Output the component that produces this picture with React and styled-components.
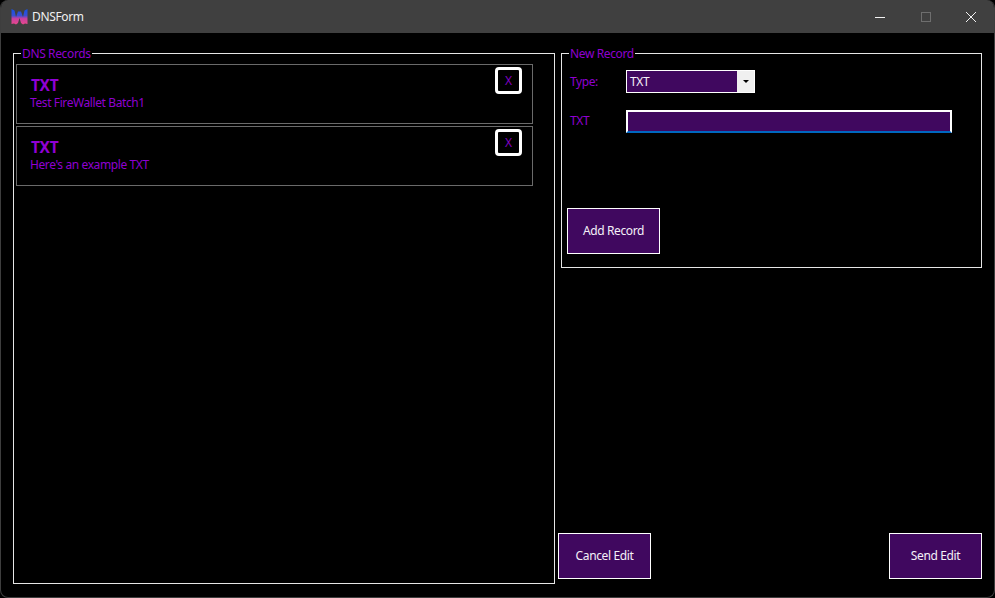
import React from "react";
import styled, { createGlobalStyle } from "styled-components";

const Global = createGlobalStyle`
  html, body { margin: 0; padding: 0; background: #000; }
  * { box-sizing: border-box; }
  body { font-family: "Noto Sans", "Open Sans", "Liberation Sans", sans-serif; }
`;

const Win = styled.div`
  width: 995px;
  height: 598px;
  display: flex;
  flex-direction: column;
  background: #000;
  border-radius: 8px;
  border: 1px solid #3e3e3e;
  border-top: 0;
  overflow: hidden;
`;

const TitleBar = styled.div`
  height: 33px;
  flex: none;
  margin: 0 -1px;
  background: #404040;
  display: flex;
  align-items: center;
  padding: 0 1px 0 11px;
  color: #f0f0f0;
  font-size: 12px;
`;

const TitleText = styled.span`
  margin-left: 4px;
  flex: 1;
  letter-spacing: -0.35px;
`;

const WinButton = styled.div`
  width: 45.5px;
  height: 33px;
  display: flex;
  align-items: center;
  justify-content: center;
`;

const Body = styled.div`
  flex: 1;
  display: flex;
  padding: 13px 12px 0 12px;
  min-height: 0;
`;

const Group = styled.fieldset`
  margin: 0;
  padding: 0;
  border: 1px solid #e6e6e6;
  min-width: 0;
`;

const RecordsGroup = styled(Group)`
  width: 542px;
  height: 538px;
  flex: none;
  padding: 4px 21px 0 2px;
  display: flex;
  flex-direction: column;
  gap: 2px;
`;

const Legend = styled.legend`
  margin-left: ${p => p.$ml}px;
  padding: 0 1px;
  height: 14px;
  font-size: 12px;
  line-height: 16px;
  color: #8f00d0;
  letter-spacing: -0.37px;
`;

const Card = styled.div`
  height: 60px;
  flex: none;
  border: 1px solid #6a6a6a;
  display: flex;
  justify-content: space-between;
  padding: 2px 10px 0 13px;
`;

const CardText = styled.div`
  display: flex;
  flex-direction: column;
  padding-top: 8px;
`;

const CardTitle = styled.div`
  font-size: 15.5px;
  line-height: 20px;
  font-weight: 700;
  color: #9000d4;
  letter-spacing: -0.35px;
  margin-left: 1px;
`;

const CardSub = styled.div`
  font-size: 12px;
  line-height: 15px;
  color: #8f00d0;
  letter-spacing: -0.4px;
`;

const XButton = styled.div`
  width: 27px;
  height: 27px;
  border: 3px solid #fff;
  border-radius: 4px;
  display: flex;
  align-items: center;
  justify-content: center;
  font-size: 12px;
  color: #8000c0;
`;

const Side = styled.div`
  flex: 1;
  margin-left: 3px;
  height: 544px;
  display: flex;
  flex-direction: column;
  justify-content: space-between;
`;

const NewGroup = styled(Group)`
  margin-left: 3px;
  width: 421px;
  height: 222px;
  flex: none;
  padding: 10px 0 0 5px;
  display: flex;
  flex-direction: column;
  align-items: flex-start;
`;

const Row = styled.div`
  display: flex;
  align-items: center;
  margin-left: 3px;
  margin-bottom: ${p => p.$mb || 0}px;
`;

const FieldLabel = styled.label`
  width: 56px;
  padding-bottom: ${p => p.$lift || 0}px;
  font-size: 12px;
  color: #8f00d0;
  letter-spacing: -0.4px;
`;

const Select = styled.div`
  width: 129px;
  height: 23px;
  display: flex;
  border: 1px solid #fff;
  background: #40085f;
  color: #f4f0f8;
  font-size: 12px;
  line-height: 21px;
`;

const SelectValue = styled.span`
  flex: 1;
  padding-left: 3px;
  letter-spacing: -0.3px;
`;

const SelectArrow = styled.span`
  width: 17px;
  background: #f0f0f0;
  display: flex;
  align-items: center;
  justify-content: center;
  &::after {
    content: "";
    border-left: 3px solid transparent;
    border-right: 3px solid transparent;
    border-top: 3px solid #000;
  }
`;

const TextInput = styled.div`
  width: 326px;
  height: 23px;
  background: #40085f;
  border: 2px solid #fff;
  border-bottom: 2px solid #0067c0;
`;

const ActionButton = styled.div`
  width: 93px;
  height: 46px;
  flex: none;
  background: #40085f;
  border: 1px solid #fff;
  padding-bottom: 2px;
  display: flex;
  align-items: center;
  justify-content: center;
  color: #f4f0f8;
  font-size: 12px;
  letter-spacing: -0.38px;
`;

const Actions = styled.div`
  display: flex;
  justify-content: space-between;
  margin-bottom: 11px;
`;

const Logo = () => (
  <svg width="17" height="16" viewBox="0 0 17 16">
    <defs>
      <linearGradient id="lg" x1="0" y1="0" x2="0" y2="1">
        <stop offset="0" stopColor="#1450e8" />
        <stop offset="0.42" stopColor="#3a50d0" />
        <stop offset="0.62" stopColor="#c8409f" />
        <stop offset="1" stopColor="#e8488c" />
      </linearGradient>
    </defs>
    <path
      d="M0.5 0 L3.5 1.5 L5 8 L7 2.5 L10 2.5 L12 8 L13.5 1.5 L16.5 0 L16.5 15 L14 14.5 L12 15.5 L10 14 L8.5 9 L7 14 L5 15.5 L3 14.5 L0.5 15 Z"
      fill="url(#lg)"
    />
  </svg>
);

const Minimize = () => (
  <svg width="10" height="10" viewBox="0 0 10 10"><path d="M0 5.5H10" stroke="#f2f2f2" strokeWidth="1" /></svg>
);
const Maximize = () => (
  <svg width="10" height="10" viewBox="0 0 10 10"><rect x="0.5" y="0.5" width="9" height="9" fill="none" stroke="#6e6e6e" strokeWidth="1" /></svg>
);
const Close = () => (
  <svg width="10" height="10" viewBox="0 0 10 10"><path d="M0 0L10 10M10 0L0 10" stroke="#f2f2f2" strokeWidth="1" /></svg>
);

const records = [
  { type: "TXT", value: "Test FireWallet Batch1" },
  { type: "TXT", value: "Here's an example TXT" },
];

export default function App() {
  return (
    <>
      <Global />
      <Win>
        <TitleBar>
          <Logo />
          <TitleText>DNSForm</TitleText>
          <WinButton><Minimize /></WinButton>
          <WinButton><Maximize /></WinButton>
          <WinButton><Close /></WinButton>
        </TitleBar>
        <Body>
          <RecordsGroup>
            <Legend $ml={5}>DNS Records</Legend>
            {records.map((r, i) => (
              <Card key={i}>
                <CardText>
                  <CardTitle>{r.type}</CardTitle>
                  <CardSub>{r.value}</CardSub>
                </CardText>
                <XButton>X</XButton>
              </Card>
            ))}
          </RecordsGroup>
          <Side>
            <NewGroup>
              <Legend $ml={2}>New Record</Legend>
              <Row $mb={17}>
                <FieldLabel>Type:</FieldLabel>
                <Select>
                  <SelectValue>TXT</SelectValue>
                  <SelectArrow />
                </Select>
              </Row>
              <Row $mb={75}>
                <FieldLabel $lift={2}>TXT</FieldLabel>
                <TextInput />
              </Row>
              <ActionButton>Add Record</ActionButton>
            </NewGroup>
            <Actions>
              <ActionButton>Cancel Edit</ActionButton>
              <ActionButton>Send Edit</ActionButton>
            </Actions>
          </Side>
        </Body>
      </Win>
    </>
  );
}
